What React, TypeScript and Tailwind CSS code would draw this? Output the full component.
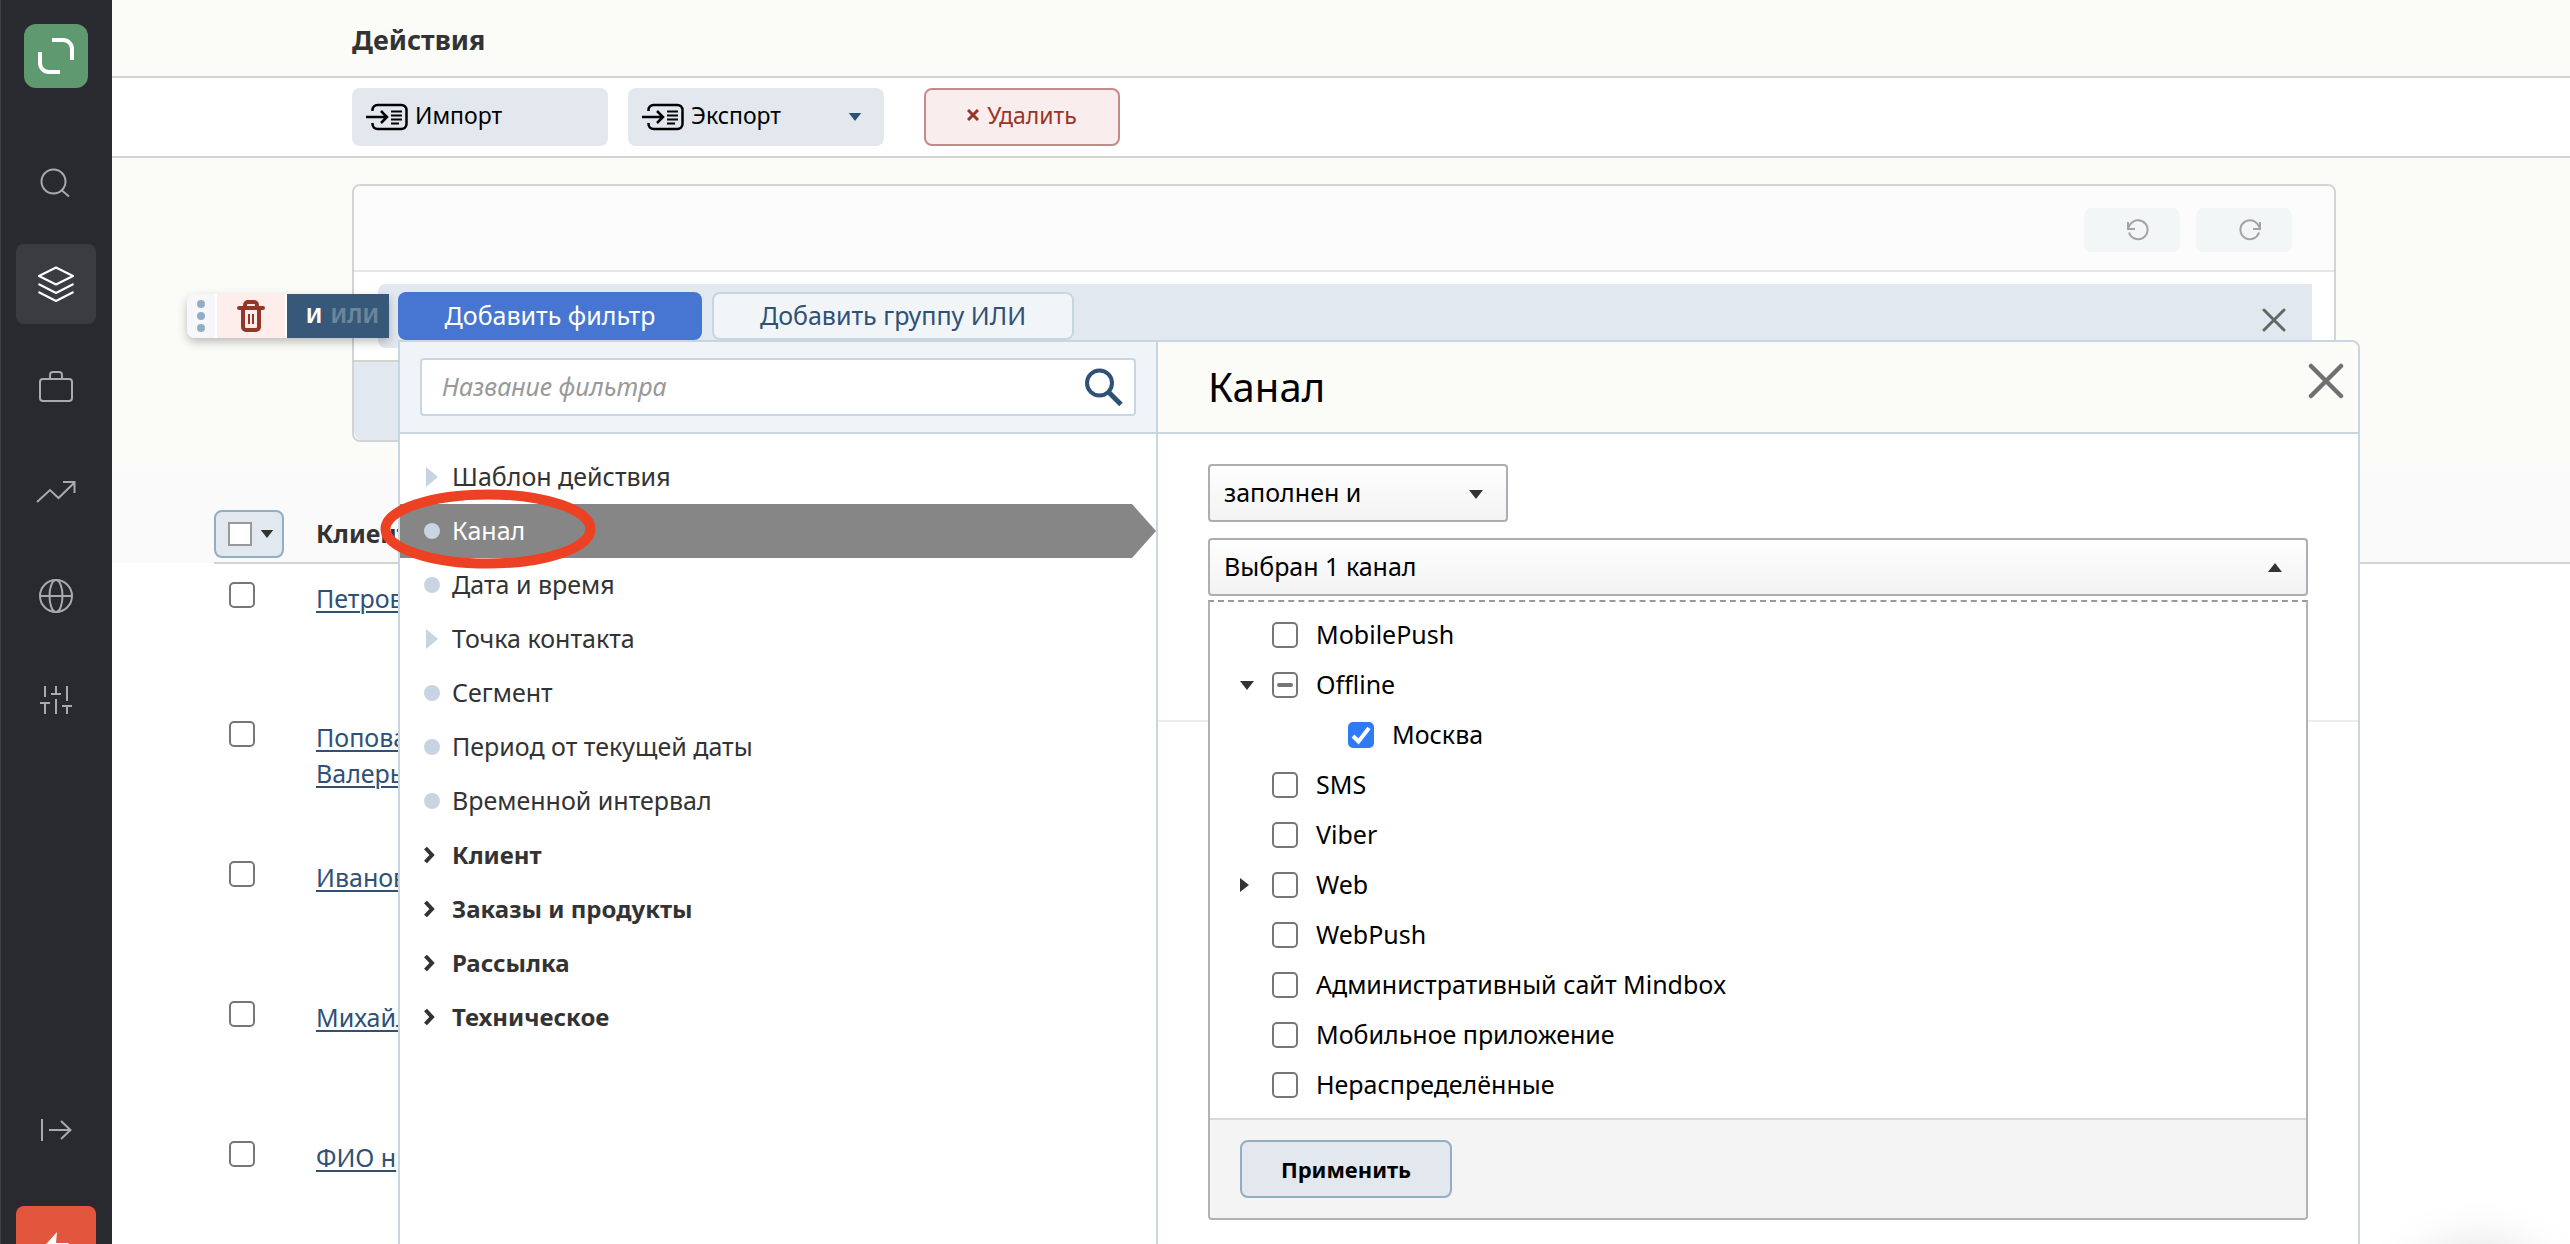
import type { ReactNode } from "react";

type FilterItem = {
  label: string;
  kind: "branch" | "leaf" | "group";
  active?: boolean;
};

type Channel = {
  label: string;
  arrow?: "open" | "closed";
  nested?: boolean;
  state?: "checked" | "mixed";
};

const filters: FilterItem[] = [
  { label: "Шаблон действия", kind: "branch" },
  { label: "Канал", kind: "leaf", active: true },
  { label: "Дата и время", kind: "leaf" },
  { label: "Точка контакта", kind: "branch" },
  { label: "Сегмент", kind: "leaf" },
  { label: "Период от текущей даты", kind: "leaf" },
  { label: "Временной интервал", kind: "leaf" },
  { label: "Клиент", kind: "group" },
  { label: "Заказы и продукты", kind: "group" },
  { label: "Рассылка", kind: "group" },
  { label: "Техническое", kind: "group" },
];

const channels: Channel[] = [
  { label: "MobilePush" },
  { label: "Offline", arrow: "open", state: "mixed" },
  { label: "Москва", nested: true, state: "checked" },
  { label: "SMS" },
  { label: "Viber" },
  { label: "Web", arrow: "closed" },
  { label: "WebPush" },
  { label: "Административный сайт Mindbox" },
  { label: "Мобильное приложение" },
  { label: "Нераспределённые" },
];

const clients = [["Петров"], ["Попова", "Валерь"], ["Иванов"], ["Михайл"], ["ФИО н"]];

function NavIcon({ children }: { children: ReactNode }) {
  return (
    <svg
      viewBox="0 0 40 40"
      className="size-10"
      fill="none"
      stroke="currentColor"
      strokeWidth="2"
      aria-hidden="true"
    >
      {children}
    </svg>
  );
}

function NavLink({
  label,
  active,
  children,
}: {
  label: string;
  active?: boolean;
  children: ReactNode;
}) {
  return (
    <a
      href="#"
      aria-label={label}
      className={
        active
          ? "flex size-20 items-center justify-center rounded-lg bg-[#3a3c41] text-white"
          : "flex size-20 items-center justify-center text-[#a9aaac]"
      }
    >
      <NavIcon>{children}</NavIcon>
    </a>
  );
}

function Sidebar() {
  return (
    <aside className="flex h-screen w-28 shrink-0 flex-col items-center overflow-hidden bg-[#292a2f] shadow-[inset_1px_0_0_#3d3e43]">
      <a
        href="#"
        aria-label="Главная"
        className="mt-6 size-16 shrink-0 rounded-xl bg-[#5f9970]"
      >
        <svg viewBox="0 0 64 64" fill="none" stroke="#fff" strokeWidth="4" aria-hidden="true">
          <path d="M28 16H39a9 9 0 0 1 9 9V36M16 28V39a9 9 0 0 0 9 9H36" />
        </svg>
      </a>
      <nav className="mt-[54px] flex flex-col gap-[22px]">
        <NavLink label="Поиск">
          <circle cx="17.500" cy="19.500" r="12" />
          <path d="M26 28.500L33 34.500" />
        </NavLink>
        <NavLink label="Данные" active>
          <path
            d="M20 3.500L37 12L20 20.500L3 12ZM2.500 20L20 29L37.500 20M2.500 28L20 37L37.500 28"
            strokeLinejoin="round"
          />
        </NavLink>
        <NavLink label="Кампании">
          <rect x="4" y="13" width="32" height="22" rx="3" />
          <path d="M14 13V9a3 3 0 0 1 3-3h6a3 3 0 0 1 3 3v4" />
        </NavLink>
      </nav>
      <nav className="mt-[26px] flex flex-col gap-6">
        <NavLink label="Отчёты">
          <path d="M1 30L14 18L22.500 26L38 11M27 10H38.500V21" />
        </NavLink>
        <NavLink label="Сайт">
          <circle cx="20" cy="20" r="16" />
          <ellipse cx="20" cy="20" rx="6.500" ry="16" />
          <path d="M4 20H36" />
        </NavLink>
        <NavLink label="Настройки">
          <path d="M9 6V17M4 23H14M9 23V34M20 6V14M15 14H25M20 19V34M31 6V21M26 26H36M31 26V34" />
        </NavLink>
      </nav>
      <div className="mt-auto -mb-[42px] flex flex-col gap-9">
        <NavLink label="Развернуть">
          <path d="M6 9V31M13 20H34M25 11L34.500 20L25 29" />
        </NavLink>
        <a
          href="#"
          aria-label="Помощь"
          className="flex h-20 w-20 justify-center rounded-lg bg-[#e2563e] pt-[26px]"
        >
          <svg viewBox="0 0 40 36" className="h-9 w-10" fill="#fff" aria-hidden="true">
            <path d="M21 0L3 20H16L14 35L33 11H20Z" />
          </svg>
        </a>
      </div>
    </aside>
  );
}

function TransferIcon() {
  return (
    <svg
      viewBox="0 0 43 28"
      className="h-7 w-[43px]"
      fill="none"
      stroke="#000"
      strokeWidth="2.500"
      aria-hidden="true"
    >
      <path d="M6.500 8V7a5 5 0 0 1 5-5h24a5 5 0 0 1 5 5v14a5 5 0 0 1-5 5h-24a5 5 0 0 1-5-5v-1" />
      <path d="M0 14H21M15 8L21 14L15 20" />
      <path d="M25 8.500H36M25 12.500H36M25 16.500H36M25 20.500H33" strokeWidth="2" />
    </svg>
  );
}

function Triangle({ className }: { className: string }) {
  return (
    <svg viewBox="0 0 14 9" className={className} fill="currentColor" aria-hidden="true">
      <path d="M0 0H14L7 9Z" />
    </svg>
  );
}

function HistoryIcon({ className }: { className?: string }) {
  return (
    <svg viewBox="0 0 24 24" className={className} fill="none" stroke="#a3a3a3" strokeWidth="2" aria-hidden="true">
      <path d="M3 14.500A9.500 9.500 0 1 0 4.500 6L2 10M2 4V11H9" />
    </svg>
  );
}

function CrossIcon({ className }: { className: string }) {
  return (
    <svg
      viewBox="0 0 24 24"
      className={className}
      stroke="currentColor"
      strokeWidth="3"
      strokeLinecap="round"
      aria-hidden="true"
    >
      <path d="M2 2L22 22M22 2L2 22" />
    </svg>
  );
}

function Check({ id, label, state }: { id: string; label?: string; state?: Channel["state"] }) {
  return (
    <span className="grid size-[26px] shrink-0 place-items-center">
      <input
        id={id}
        type="checkbox"
        aria-label={label}
        defaultChecked={state === "checked"}
        className="col-start-1 row-start-1 size-[26px] appearance-none rounded-[5px] border-2 border-[#767676] bg-white checked:border-[#2f7bf6] checked:bg-[#2f7bf6]"
      />
      {state === "checked" ? (
        <svg viewBox="0 0 26 26" className="pointer-events-none col-start-1 row-start-1 size-[26px]" fill="none" stroke="#fff" strokeWidth="4" aria-hidden="true">
          <path d="M5 14L10.500 19.500L21 6" />
        </svg>
      ) : null}
      {state === "mixed" ? (
        <span className="pointer-events-none col-start-1 row-start-1 h-1 w-4 rounded-sm bg-[#767676]" />
      ) : null}
    </span>
  );
}

function ActionBar() {
  return (
    <div className="flex border-b-2 border-[#d3d4d1] bg-white py-[10px] pl-60 text-[23px] text-black">
      <button
        type="button"
        className="flex h-[58px] w-64 items-center gap-[6px] rounded-lg bg-[#e2e8ee] pl-[14px]"
      >
        <TransferIcon />
        <span className="pb-1">Импорт</span>
      </button>
      <button
        type="button"
        className="ml-5 flex h-[58px] w-64 items-center gap-[6px] rounded-lg bg-[#e2e8ee] pr-[22px] pl-[14px]"
      >
        <TransferIcon />
        <span className="flex-1 pb-1 text-left">Экспорт</span>
        <Triangle className="h-2 w-[14px] text-[#2f5175]" />
      </button>
      <button
        type="button"
        className="ml-10 flex h-[58px] w-[196px] items-center justify-center gap-2 rounded-lg border-2 border-[#c48b8b] bg-[#faeded] pb-1 text-[#963628]"
      >
        <svg viewBox="0 0 12 12" className="size-3" stroke="currentColor" strokeWidth="3" aria-hidden="true">
          <path d="M1 1L11 11M11 1L1 11" />
        </svg>
        Удалить
      </button>
    </div>
  );
}

function GroupHandle() {
  return (
    <div className="absolute top-[10px] -left-[191px] z-20 flex h-11 w-[202px] gap-[2px] rounded-l-lg bg-white shadow-[0_4px_10px_rgba(0,0,0,0.25)]">
      <button
        type="button"
        aria-label="Переместить"
        className="flex w-7 flex-col items-center justify-center gap-1 rounded-l-lg bg-[#f5f7fb]"
      >
        <span className="size-2 rounded-full bg-[#93adc4]" />
        <span className="size-2 rounded-full bg-[#93adc4]" />
        <span className="size-2 rounded-full bg-[#93adc4]" />
      </button>
      <button
        type="button"
        aria-label="Удалить группу"
        className="flex w-[68px] items-center justify-center bg-[#fdeeeb]"
      >
        <svg viewBox="0 0 28 32" className="h-8 w-7" fill="none" stroke="#963628" aria-hidden="true">
          <path d="M2 8H26" strokeWidth="4" strokeLinecap="round" />
          <path d="M8 7V5a3 3 0 0 1 3-3h6a3 3 0 0 1 3 3v2" strokeWidth="4" />
          <path d="M6 9V27a3 3 0 0 0 3 3h10a3 3 0 0 0 3-3V9" strokeWidth="4" />
          <path d="M12 14V24M16 14V24" strokeWidth="2" />
        </svg>
      </button>
      <button
        type="button"
        className="flex flex-1 items-center justify-end gap-2 bg-[#375878] pr-[10px] text-[21px] font-bold text-white"
      >
        <span>И</span>
        <span className="text-[#6c859b]">ИЛИ</span>
      </button>
    </div>
  );
}

function Marker({ kind }: { kind: FilterItem["kind"] }) {
  if (kind === "leaf") {
    return <span className="size-4 rounded-full bg-[#c8d4e1]" />;
  }
  if (kind === "branch") {
    return (
      <svg viewBox="0 0 14 20" className="h-5 w-[14px]" fill="#c8d4e1" aria-hidden="true">
        <path d="M2 0L14 10L2 20Z" />
      </svg>
    );
  }
  return (
    <svg viewBox="0 0 12 18" className="h-[18px] w-3" fill="none" stroke="#333" strokeWidth="4" aria-hidden="true">
      <path d="M1.500 2L8 9L1.500 16" />
    </svg>
  );
}

function FilterList() {
  return (
    <div className="relative w-[758px] shrink-0 border-r-2 border-[#c8d6e2] bg-white">
      <div className="border-b-2 border-[#c8d6e2] bg-[#f0f4f8] px-5 py-4">
        <div className="flex h-[58px] items-center rounded border-2 border-[#c8d6e2] bg-white pr-[10px] pl-5">
          <input
            type="text"
            aria-label="Название фильтра"
            placeholder="Название фильтра"
            className="min-w-0 flex-1 text-[25px] italic outline-none placeholder:text-[#999]"
          />
          <button type="button" aria-label="Найти">
            <svg viewBox="0 0 40 40" className="size-10" fill="none" stroke="#2f5175" aria-hidden="true">
              <circle cx="15.500" cy="16" r="12.500" strokeWidth="4" />
              <path d="M25 25.500L37 37.500" strokeWidth="5" />
            </svg>
          </button>
        </div>
      </div>
      <ul className="pt-4 text-[25px] text-[#333]">
        {filters.map((item) => (
          <li key={item.label}>
            <button
              type="button"
              className={
                item.active
                  ? "flex h-[54px] w-full items-center bg-[#868686] pl-6 text-white [clip-path:polygon(0_0,calc(100%-24px)_0,100%_50%,calc(100%-24px)_100%,0_100%)]"
                  : "flex h-[54px] w-full items-center pl-6"
              }
            >
              <span className="flex w-7">
                <Marker kind={item.kind} />
              </span>
              <span className={item.kind === "group" ? "text-2xl font-bold" : ""}>
                {item.label}
              </span>
            </button>
          </li>
        ))}
      </ul>
      {/* highlight around the chosen filter */}
      <svg
        viewBox="0 0 216 80"
        className="pointer-events-none absolute top-[147px] -left-5 h-20 w-[216px]"
        fill="none"
        stroke="#ed4124"
        strokeWidth="10"
        aria-hidden="true"
      >
        <ellipse cx="108" cy="40" rx="102.500" ry="34.500" />
      </svg>
    </div>
  );
}

function ChannelMenu() {
  return (
    <div className="absolute inset-x-0 top-full mt-1 rounded-b border-2 border-t-2 border-[#b1b1b6] border-t-[#999] bg-white [border-top-style:dashed]">
      <ul className="py-2">
        {channels.map((channel, index) => (
          <li
            key={channel.label}
            className={channel.nested ? "flex h-[50px] items-center pl-[106px]" : "flex h-[50px] items-center pl-[30px]"}
          >
            <span className="flex w-8 shrink-0 text-[#333]">
              {channel.arrow === "open" ? <Triangle className="h-[9px] w-[14px]" /> : null}
              {channel.arrow === "closed" ? (
                <svg viewBox="0 0 9 14" className="h-[14px] w-[9px]" fill="currentColor" aria-hidden="true">
                  <path d="M0 0L9 7L0 14Z" />
                </svg>
              ) : null}
            </span>
            <Check id={`channel-${index}`} state={channel.state} />
            <label htmlFor={`channel-${index}`} className="pl-[18px]">
              {channel.label}
            </label>
          </li>
        ))}
      </ul>
      <div className="rounded-b border-t-2 border-[#d9d9d9] bg-[#f4f4f4] px-[30px] py-5">
        <button
          type="button"
          className="h-[58px] w-[212px] rounded-lg border-2 border-[#93adc4] bg-[#e2e8ee] text-[22px] font-bold"
        >
          Применить
        </button>
      </div>
    </div>
  );
}

function FilterPopup() {
  return (
    <div className="absolute top-14 -right-12 left-5 z-10 flex h-screen rounded-tr-lg border-2 border-[#c8d6e2] bg-white">
      <FilterList />
      <div className="min-w-0 flex-1">
        <div className="flex h-[92px] items-center justify-between rounded-tr-lg border-b-2 border-[#c8d6e2] bg-[#fbfcf7] pr-[14px] pl-[50px] text-black">
          <h2 className="text-[40px]">Канал</h2>
          <button type="button" aria-label="Закрыть" className="pb-3 text-[#707070]">
            <CrossIcon className="size-9" />
          </button>
        </div>
        <div className="flex flex-col items-start gap-4 border-b-2 border-[#ececec] px-[50px] pt-[30px] pb-[124px] text-[25px] text-black">
          <div className="relative w-[300px]">
            <select
              aria-label="Условие"
              className="h-[58px] w-full appearance-none rounded border-2 border-[#aeadb3] bg-linear-to-b from-[#fefefe] to-[#f3f3f3] pl-[14px]"
            >
              <option>заполнен и</option>
            </select>
            <Triangle className="pointer-events-none absolute top-[26px] right-[25px] h-[9px] w-[14px] text-[#333]" />
          </div>
          <div className="relative w-full">
            <button
              type="button"
              aria-expanded="true"
              className="flex h-[58px] w-full items-center justify-between rounded border-2 border-[#aeadb3] bg-linear-to-b from-[#fefefe] to-[#f3f3f3] pr-6 pl-[14px]"
            >
              Выбран 1 канал
              <Triangle className="h-[9px] w-[14px] rotate-180 text-[#333]" />
            </button>
            <ChannelMenu />
          </div>
        </div>
      </div>
    </div>
  );
}

function FilterPanel() {
  return (
    <section className="relative z-10 mr-[234px] ml-60 rounded-lg border-2 border-[#d3d4d1] bg-white">
      <div className="flex h-[86px] items-center justify-end gap-4 rounded-t-lg border-b-2 border-[#e2e8ee] bg-[#fcfcfc] pt-1 pr-[42px]">
        <button type="button" aria-label="Отменить" className="h-11 w-24 rounded-lg bg-[#f2f6f7] pl-[42px]">
          <HistoryIcon className="size-6" />
        </button>
        <button type="button" aria-label="Повторить" className="h-11 w-24 rounded-lg bg-[#f2f6f7] pl-[42px]">
          <HistoryIcon className="size-6 -scale-x-100" />
        </button>
      </div>
      <div className="py-3 pr-[22px] pl-6">
        <div className="relative flex h-16 items-start gap-[10px] rounded-l-lg bg-[#e2e8ef] pt-2 pr-[26px] pl-5 text-[25px]">
          <GroupHandle />
          <button type="button" className="h-12 w-[304px] rounded-lg bg-[#4676d1] text-white">
            Добавить фильтр
          </button>
          <button
            type="button"
            className="h-12 w-[362px] rounded-lg border-2 border-[#c8d6e2] bg-[#f2f5f8] text-[#2f5175]"
          >
            Добавить группу ИЛИ
          </button>
          <button type="button" aria-label="Удалить условие" className="mt-4 ml-auto text-[#666]">
            <CrossIcon className="size-6" />
          </button>
          <FilterPopup />
        </div>
      </div>
      <div className="h-20 rounded-b-lg border-t-2 border-[#d3d4d1] bg-[#e2e8ef]" />
    </section>
  );
}

function ClientTable() {
  return (
    <table className="w-full table-fixed bg-white text-left text-[25px] leading-9">
      <thead>
        <tr className="h-[92px] bg-[#fafafa] align-bottom">
          <td className="w-[102px]" />
          <th className="w-[102px] border-b-2 border-[#d3d4d1] pb-1">
            <button
              type="button"
              aria-label="Выбрать всех"
              className="flex h-12 w-[70px] items-center gap-2 rounded-lg border-2 border-[#93adc4] bg-[#e2e8ef] pl-3"
            >
              <span className="size-6 border-2 border-[#999] bg-white" />
              <Triangle className="h-2 w-[14px] text-[#333]" />
            </button>
          </th>
          <th className="border-b-2 border-[#d3d4d1] pb-[11px] font-bold text-[#333]">Клиент</th>
        </tr>
      </thead>
      <tbody>
        {clients.map((lines, index) => (
          <tr key={lines[0]} className="h-[140px] align-top">
            <td />
            <td className="pt-[18px] pl-[15px]">
              <Check id={`client-${index}`} label={lines.join(" ")} />
            </td>
            <td className="pt-4">
              <a href="#" className="inline-block text-[#2f5175] underline decoration-2 underline-offset-[3px]">
                {lines.map((line) => (
                  <span key={line} className="block">
                    {line}
                  </span>
                ))}
              </a>
            </td>
          </tr>
        ))}
      </tbody>
    </table>
  );
}

export default function App() {
  return (
    <div className="flex h-screen overflow-hidden bg-white font-['Noto_Sans',sans-serif]">
      <Sidebar />
      <main className="relative min-w-0 flex-1 overflow-hidden">
        <header className="flex h-[78px] items-center border-b-2 border-[#d3d4d1] bg-[#fbfcf7] pt-1 pl-60">
          <h1 className="text-[27px] font-bold text-[#333]">Действия</h1>
        </header>
        <ActionBar />
        <div className="bg-[#fbfcf7] pt-[26px] pb-[29px]">
          <FilterPanel />
        </div>
        <ClientTable />
        <div className="absolute right-7 -bottom-36 size-32 rounded-full bg-white shadow-[0_0_60px_rgba(0,0,0,0.25)]" />
      </main>
    </div>
  );
}
